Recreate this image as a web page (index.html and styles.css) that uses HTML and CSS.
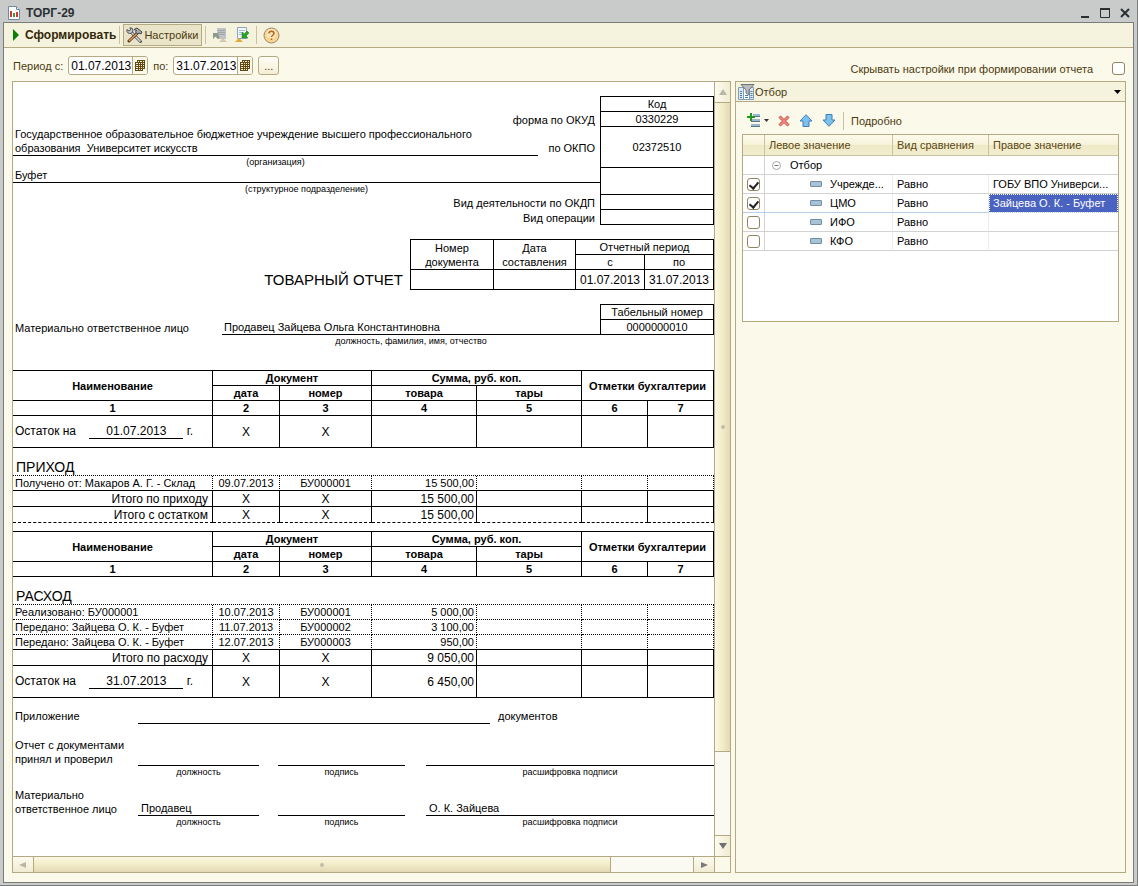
FILE: index.html
```html
<!DOCTYPE html>
<html lang="ru">
<head>
<meta charset="utf-8">
<title>ТОРГ-29</title>
<link rel="stylesheet" href="styles.css">
</head>
<body>
<div class="window">
  <header class="titlebar">
    <svg class="app-icon" width="12" height="14" viewBox="0 0 12 14"><path d="M.5.5h8l3 3v10H.5z" fill="#fff" stroke="#6f8aa5"/><path d="M8.500.5v3h3" fill="#dfe8f0" stroke="#6f8aa5"/><path d="M2 5h2v6H2z" fill="#d8362a"/><path d="M5 7h2v4H5z" fill="#3a9a3a"/><path d="M8 6h2v5H8z" fill="#d8362a"/></svg>
    <h1>ТОРГ-29</h1>
    <div class="window-buttons">
      <button type="button" aria-label="Свернуть"><svg width="12" height="12"><path d="M2 10h8" stroke="#2b3033" stroke-width="2"/></svg></button>
      <button type="button" aria-label="Развернуть"><svg width="12" height="12"><path d="M1.500 2v8.500h9V2" fill="none" stroke="#2b3033"/><path d="M1 2h10" stroke="#2b3033" stroke-width="2"/></svg></button>
      <button type="button" aria-label="Закрыть"><svg width="12" height="12"><path d="M2 2l8 8M10 2l-8 8" stroke="#2b3033" stroke-width="2"/></svg></button>
    </div>
  </header>

  <div class="client">
    <div class="toolbar">
      <button type="button" class="tool run"><svg width="8" height="12"><path d="M1 0l6 6-6 6z" fill="#0a7d0a"/></svg>Сформировать</button>
      <span class="sep"></span>
      <button type="button" class="tool pressed"><svg width="17" height="16" viewBox="0 0 17 16"><path d="M5 5l9.500 9.500" stroke="#4f5357" stroke-width="3" stroke-linecap="round"/><path d="M5 5l9.500 9.500" stroke="#d3d7da" stroke-width="1.500"/><path d="M1 2.500a3 3 0 0 0 4.500 3.500l1.500-2A3 3 0 0 0 4 .7L4.500 3 3 4z" fill="#c4c8cb" stroke="#4f5357"/><path d="M12 5.500L3 14" stroke="#5b3619" stroke-width="3" stroke-linecap="round"/><path d="M11 6.500L3 14" stroke="#d89a62" stroke-width="1.500"/><path d="M8 2.500L11 1l5 4-1 2-2-1-1.500 1L9.500 5l1-1.500z" fill="#a9aeb2" stroke="#3f4346"/></svg>Настройки</button>
      <span class="sep"></span>
      <button type="button" class="tool" aria-label="Восстановить настройки" disabled><svg width="16" height="16" viewBox="0 0 16 16"><path d="M5 1h9v11H5z" fill="#c0c3c5"/><path d="M6 3.500h7M6 5.500h7M6 7.500h7" stroke="#a0a4a7"/><path d="M1 6h6L5.500 7.500 8 10l-2 2-2.500-2.500L1 12z" fill="#8d9889"/><path d="M7 15l4-4 4 4z" fill="#d3c8ae"/></svg></button>
      <button type="button" class="tool" aria-label="Сохранить настройки"><svg width="16" height="16" viewBox="0 0 16 16"><path d="M3.500.5h9v11h-9z" fill="#f3f7fb" stroke="#8aa5c0"/><path d="M5 3.500h6M5 5.500h5M5 7.500h3" stroke="#a9bfd4"/><path d="M8 5v6h6l-2-2 3-3-2-2-3 3z" fill="#2ba12b" stroke="#168716" stroke-width=".5"/><path d="M1 15l4-4 4 4z" fill="#e0aa3c"/></svg></button>
      <span class="sep"></span>
      <button type="button" class="tool" aria-label="Справка"><svg width="17" height="17" viewBox="0 0 17 17"><circle cx="8.500" cy="8.500" r="7.500" fill="#fbd28f" stroke="#9a8a72"/><circle cx="8.500" cy="7" r="5" fill="#fde6bd"/><path d="M6 6.500c0-3 5-3 5 0 0 1.800-2.500 1.700-2.500 3.500M8.500 11.500v1.500" fill="none" stroke="#b5651d" stroke-width="1.500"/></svg></button>
    </div>

    <div class="options">
      <div class="period">
        <label for="from">Период с:</label>
        <span class="date"><input id="from" type="text" value="01.07.2013"><button type="button" aria-label="Выбрать дату начала"><svg width="10" height="11"><path d="M2 0h8v9H8v2H0V2h2z" fill="#604913"/><path d="M3 1h1v1H3zM5 1h2v1H5zM8 1h1v1H8zM1 3h2v1H1zM4 3h1v1H4zM6 3h1v1H6zM8 3h1v1H8zM1 5h2v1H1zM4 5h1v1H4zM6 5h1v1H6zM8 5h1v1H8zM1 7h2v1H1zM4 7h1v1H4zM6 7h1v1H6zM8 7h1v1H8zM1 9h2v1H1zM4 9h1v1H4zM6 9h1v1H6z" fill="#f5ecd0"/></svg></button></span>
        <label for="to">по:</label>
        <span class="date"><input id="to" type="text" value="31.07.2013"><button type="button" aria-label="Выбрать дату окончания"><svg width="10" height="11"><path d="M2 0h8v9H8v2H0V2h2z" fill="#604913"/><path d="M3 1h1v1H3zM5 1h2v1H5zM8 1h1v1H8zM1 3h2v1H1zM4 3h1v1H4zM6 3h1v1H6zM8 3h1v1H8zM1 5h2v1H1zM4 5h1v1H4zM6 5h1v1H6zM8 5h1v1H8zM1 7h2v1H1zM4 7h1v1H4zM6 7h1v1H6zM8 7h1v1H8zM1 9h2v1H1zM4 9h1v1H4zM6 9h1v1H6z" fill="#f5ecd0"/></svg></button></span>
        <button type="button" class="more">...</button>
      </div>
      <label class="hide-option">Скрывать настройки при формировании отчета<input type="checkbox" class="check"></label>
    </div>

    <main class="panes">
      <section class="report">
        <div class="sheet">
          <table class="form head-form">
            <colgroup><col><col class="w62"><col class="w114"></colgroup>
            <tr><td colspan="2"></td><td class="box top">Код</td></tr>
            <tr><td colspan="2" class="cap-right">форма по ОКУД</td><td class="box">0330229</td></tr>
            <tr class="h41"><td class="stack"><div class="line">Государственное образовательное бюджетное учреждение высшего профессионального<br>образования&nbsp; Университет искусств</div><div class="hint">(организация)</div></td><td class="cap-right">по ОКПО</td><td class="box">02372510</td></tr>
            <tr class="h27"><td colspan="2" class="stack"><div class="line">Буфет</div><div class="hint">(структурное подразделение)</div></td><td class="box"></td></tr>
            <tr><td colspan="2" class="cap-right">Вид деятельности по ОКДП</td><td class="box"></td></tr>
            <tr><td colspan="2" class="cap-right">Вид операции</td><td class="box"></td></tr>
          </table>

          <table class="form doc-form">
            <colgroup><col><col class="w84"><col class="w82"><col class="w69"><col class="w69"></colgroup>
            <tr><td rowspan="2"></td><td rowspan="2" class="box top">Номер<br>документа</td><td rowspan="2" class="cell top">Дата<br>составления</td><td colspan="2" class="cell top">Отчетный период</td></tr>
            <tr><td class="cell">с</td><td class="cell">по</td></tr>
            <tr class="h20"><td class="doc-title">ТОВАРНЫЙ ОТЧЕТ</td><td class="box"></td><td class="cell"></td><td class="cell big">01.07.2013</td><td class="cell big">31.07.2013</td></tr>
          </table>

          <table class="form person-form">
            <colgroup><col class="w209"><col><col class="w114"></colgroup>
            <tr><td></td><td></td><td class="box top">Табельный номер</td></tr>
            <tr><td class="text">Материально ответственное лицо</td><td class="under">Продавец Зайцева Ольга Константиновна</td><td class="box">0000000010</td></tr>
            <tr class="h12"><td></td><td class="hint">должность, фамилия, имя, отчество</td><td></td></tr>
          </table>

          <table class="form ledger">
            <colgroup><col><col class="w67"><col class="w92"><col class="w105"><col class="w105"><col class="w66"><col class="w66"></colgroup>
            <thead>
              <tr><th rowspan="2">Наименование</th><th colspan="2">Документ</th><th colspan="2">Сумма, руб. коп.</th><th colspan="2" rowspan="2">Отметки бухгалтерии</th></tr>
              <tr><th>дата</th><th>номер</th><th>товара</th><th>тары</th></tr>
              <tr><th>1</th><th>2</th><th>3</th><th>4</th><th>5</th><th>6</th><th>7</th></tr>
            </thead>
            <tbody>
              <tr class="h32 big"><td class="text"><span class="balance">Остаток на<span class="balance-date">01.07.2013</span>г.</span></td><td>X</td><td>X</td><td></td><td></td><td></td><td></td></tr>
            </tbody>
          </table>
          <h2>ПРИХОД</h2>
          <table class="form ledger rows">
            <colgroup><col><col class="w67"><col class="w92"><col class="w105"><col class="w105"><col class="w66"><col class="w66"></colgroup>
            <tr class="dotted last"><td class="text">Получено от: Макаров А. Г. - Склад</td><td>09.07.2013</td><td>БУ000001</td><td class="num">15 500,00</td><td></td><td></td><td></td></tr>
            <tr class="h16 big"><td class="total">Итого по приходу</td><td>X</td><td>X</td><td class="num">15 500,00</td><td></td><td></td><td></td></tr>
            <tr class="h16 big dashed"><td class="total">Итого с остатком</td><td>X</td><td>X</td><td class="num">15 500,00</td><td></td><td></td><td></td></tr>
          </table>

          <table class="form ledger next">
            <colgroup><col><col class="w67"><col class="w92"><col class="w105"><col class="w105"><col class="w66"><col class="w66"></colgroup>
            <thead>
              <tr><th rowspan="2">Наименование</th><th colspan="2">Документ</th><th colspan="2">Сумма, руб. коп.</th><th colspan="2" rowspan="2">Отметки бухгалтерии</th></tr>
              <tr><th>дата</th><th>номер</th><th>товара</th><th>тары</th></tr>
              <tr><th>1</th><th>2</th><th>3</th><th>4</th><th>5</th><th>6</th><th>7</th></tr>
            </thead>
          </table>
          <h2>РАСХОД</h2>
          <table class="form ledger rows">
            <colgroup><col><col class="w67"><col class="w92"><col class="w105"><col class="w105"><col class="w66"><col class="w66"></colgroup>
            <tr class="dotted"><td class="text">Реализовано: БУ000001</td><td>10.07.2013</td><td>БУ000001</td><td class="num">5 000,00</td><td></td><td></td><td></td></tr>
            <tr class="dotted"><td class="text">Передано: Зайцева О. К. - Буфет</td><td>11.07.2013</td><td>БУ000002</td><td class="num">3 100,00</td><td></td><td></td><td></td></tr>
            <tr class="dotted last"><td class="text">Передано: Зайцева О. К. - Буфет</td><td>12.07.2013</td><td>БУ000003</td><td class="num">950,00</td><td></td><td></td><td></td></tr>
            <tr class="h16 big"><td class="total">Итого по расходу</td><td>X</td><td>X</td><td class="num">9 050,00</td><td></td><td></td><td></td></tr>
            <tr class="h32 big"><td class="text"><span class="balance">Остаток на<span class="balance-date">31.07.2013</span>г.</span></td><td>X</td><td>X</td><td class="num">6 450,00</td><td></td><td></td><td></td></tr>
          </table>

          <div class="attach"><span class="sign-label">Приложение</span><span class="attach-line"></span><span>документов</span></div>
          <div class="signs">
            <div class="sign-label">Отчет с документами<br>принял и проверил</div>
            <div class="sign-line"></div><div class="sign-line"></div><div class="sign-line"></div>
            <div class="hint h-first">должность</div><div class="hint">подпись</div><div class="hint">расшифровка подписи</div>
          </div>
          <div class="signs">
            <div class="sign-label">Материально<br>ответственное лицо</div>
            <div class="sign-line">Продавец</div><div class="sign-line"></div><div class="sign-line">О. К. Зайцева</div>
            <div class="hint h-first">должность</div><div class="hint">подпись</div><div class="hint">расшифровка подписи</div>
          </div>
        </div>
        <div class="vscroll">
          <button type="button" aria-label="Вверх"><svg width="8" height="8"><path d="M0 7l4-6 4 6z" fill="#b9b6a6"/></svg></button>
          <div class="thumb"><i></i></div>
          <div class="track"></div>
          <button type="button" aria-label="Вниз"><svg width="8" height="8"><path d="M0 1l4 6 4-6z" fill="#6f6f6f"/></svg></button>
        </div>
        <div class="hscroll">
          <button type="button" aria-label="Влево"><svg width="8" height="8"><path d="M7 1L0 4l7 3z" fill="#b9b6a6"/></svg></button>
          <div class="thumb"><i></i></div>
          <div class="track"></div>
          <button type="button" aria-label="Вправо"><svg width="8" height="8"><path d="M1 1l7 3-7 3z" fill="#7a7a7a"/></svg></button>
        </div>
        <div class="corner"></div>
      </section>

      <aside class="settings">
        <div class="settings-head">
          <svg width="17" height="16" viewBox="0 0 17 16"><path d="M.5 3.500h15v12H.5z" fill="#fff" stroke="#7f9db9"/><path d="M1 4h4v11H1zM12 4h3v11h-3z" fill="#dce8f2"/><path d="M5.500 4v11M11.500 4v11" stroke="#7f9db9"/><path d="M2 7.500h2M2 9.500h2M2 11.500h2M2 13.500h2M7 11.500h3M7 13.500h3M12.500 7.500h2M12.500 9.500h2M12.500 11.500h2M12.500 13.500h2" stroke="#4a7aa5"/><path d="M3 .5h13L11 6v5l-3-2V6z" fill="#b9bcbd" stroke="#707577"/></svg>
          <select aria-label="Раздел настроек"><option>Отбор</option></select>
          <svg class="drop" width="7" height="4"><path d="M0 0h7L3.500 4z" fill="#000"/></svg>
        </div>
        <div class="settings-body">
          <div class="filter-tools">
            <button type="button" class="tool add" aria-label="Добавить"><svg width="14" height="15" viewBox="0 0 14 15"><path d="M6 1h7v3H6zM4 6h9v3H4zM4 11h9v3H4z" fill="#9db8cb"/><path d="M6 3.500h7M4 8.500h9M4 13.500h9" stroke="#56788f"/><path d="M4 0v8M0 4h8" stroke="#1f9a1f" stroke-width="2"/></svg><svg width="5" height="3"><path d="M0 0h5L2.500 3z" fill="#333"/></svg></button>
            <button type="button" class="tool" aria-label="Удалить"><svg width="12" height="12"><path d="M1.500 1.500l9 9M10.500 1.500l-9 9" stroke="#d0453c" stroke-width="3"/><path d="M1.500 1.500l9 9M10.500 1.500l-9 9" stroke="#f28f84" stroke-width="1.500"/></svg></button>
            <button type="button" class="tool" aria-label="Переместить вверх"><svg width="14" height="13"><path d="M7 .7L13 7h-3v5.500H4V7H1z" fill="#7cc0ee" stroke="#3f7fb5"/></svg></button>
            <button type="button" class="tool" aria-label="Переместить вниз"><svg width="14" height="13"><path d="M7 12.300L13 6h-3V.5H4V6H1z" fill="#7cc0ee" stroke="#3f7fb5"/></svg></button>
            <span class="sep"></span>
            <button type="button" class="tool">Подробно</button>
          </div>
          <div class="filter-frame">
            <table class="filter">
              <colgroup><col class="w22"><col class="w128"><col class="w96"><col></colgroup>
              <thead><tr><th></th><th>Левое значение</th><th>Вид сравнения</th><th>Правое значение</th></tr></thead>
              <tbody>
                <tr><td class="tick"></td><td colspan="3"><span class="group"><svg width="9" height="9"><circle cx="4.500" cy="4.500" r="4" fill="#fff" stroke="#a5a5a5"/><path d="M2.500 4.500h4" stroke="#777"/></svg>Отбор</span></td></tr>
                <tr><td class="tick"><input type="checkbox" class="check" aria-label="Учреждение" checked></td><td><span class="item">Учрежде...</span></td><td>Равно</td><td>ГОБУ ВПО Универси...</td></tr>
                <tr class="current"><td class="tick"><input type="checkbox" class="check" aria-label="ЦМО" checked></td><td><span class="item">ЦМО</span></td><td>Равно</td><td class="selected">Зайцева О. К. - Буфет</td></tr>
                <tr><td class="tick"><input type="checkbox" class="check" aria-label="ИФО"></td><td><span class="item">ИФО</span></td><td>Равно</td><td></td></tr>
                <tr><td class="tick"><input type="checkbox" class="check" aria-label="КФО"></td><td><span class="item">КФО</span></td><td>Равно</td><td></td></tr>
              </tbody>
            </table>
          </div>
        </div>
      </aside>
    </main>
  </div>
</div>
</body>
</html>
```
FILE: styles.css
```css
* { box-sizing: border-box; }

body {
  margin: 0;
  font: 11px/14px "Liberation Sans", Arial, sans-serif;
  color: #000;
}

button, input, select { font: inherit; color: inherit; margin: 0; }
button { padding: 0; border: 0; background: none; }
svg { display: block; flex: none; }

.window {
  display: flex;
  flex-direction: column;
  min-height: 100vh;
  padding: 1px 3px 2px;
  background: #c9cbcb;
  border: solid #7b7d7d;
  border-width: 0 1px 1px 0;
}

.titlebar {
  display: flex;
  align-items: center;
  height: 21px;
  padding: 3px 0 0 5px;
  gap: 6px;
}
.titlebar h1 { flex: 1; margin: 0; font-size: 12px; line-height: 14px; color: #2b3033; }
.window-buttons { display: flex; gap: 8px; padding-right: 3px; }

.client {
  flex: 1;
  display: flex;
  flex-direction: column;
  border: 1px solid #7b7d7d;
  background: #fbf9ea;
  color: #4b3a0e;
}

.toolbar {
  display: flex;
  align-items: center;
  height: 25px;
  padding: 0 8px;
  background: #f5f2dd;
  border-bottom: 1px solid #b3a983;
}
.tool { display: flex; align-items: center; height: 21px; }
.run { gap: 5px; font-size: 12px; font-weight: bold; color: #33280a; }
.pressed { gap: 1px; padding: 0 3px 0 2px; height: 22px; background: #e9e3c8; border: 1px solid #b3a983; }
.sep { width: 1px; height: 18px; margin: 0 3px; background: #c9c1a0; }
.toolbar .tool[aria-label] { margin: 0 3px; }

.options {
  display: flex;
  justify-content: space-between;
  align-items: center;
  height: 33px;
  padding: 0 8px 0 9px;
}
.period { display: flex; align-items: center; gap: 5px; padding-top: 2px; }
.date {
  display: flex;
  width: 80px;
  height: 19px;
  border: 1px solid #b3a983;
  border-radius: 3px;
  background: #fff;
  overflow: hidden;
}
.date input { flex: 1; min-width: 0; border: 0; padding: 0 0 0 2px; background: none; font-size: 12px; color: #000; outline: 0; }
.date button { display: grid; place-items: center; width: 15px; border-left: 1px solid #b3a983; background: #fbf9ea; }
.more { width: 21px; height: 19px; border: 1px solid #b3a983; border-radius: 3px; background: linear-gradient(#fffef5, #f3eed3); }
.hide-option { display: flex; align-items: center; gap: 19px; padding-top: 8px; }

.check {
  appearance: none;
  display: block;
  width: 13px;
  height: 13px;
  border: 1px solid #8f8560;
  border-radius: 3px;
  background: #fff;
}
.check:checked::before {
  content: "";
  display: block;
  width: 4px;
  height: 7px;
  margin: 1px 0 0 3px;
  border: solid #222;
  border-width: 0 2px 2px 0;
  rotate: 40deg;
}

.panes {
  flex: 1;
  display: grid;
  grid-template-columns: minmax(0, 719fr) minmax(0, 391fr);
  gap: 4px;
  padding: 0 7px 9px 8px;
}

.report {
  display: grid;
  grid-template-columns: minmax(0, 1fr) 16px;
  grid-template-rows: 1fr 16px;
  border: 1px solid #b3a983;
  background: #fff;
}
.sheet { padding-top: 14px; color: #000; overflow: hidden; }

.form { width: 100%; table-layout: fixed; border-spacing: 0; }
.form tr { height: 15px; }
.form td, .form th { padding: 0; line-height: 14px; white-space: nowrap; }
.form td.text, .form td.under { padding-left: 2px; }
.form .h12 { height: 12px; }
.form .h16 { height: 16px; }
.form .h20 { height: 20px; }
.form .h27 { height: 27px; }
.form .h32 { height: 32px; }
.form .h41 { height: 41px; }
.w22 { width: 22px; }
.w62 { width: 62px; }
.w66 { width: 66px; }
.w67 { width: 67px; }
.w69 { width: 69px; }
.w82 { width: 82px; }
.w84 { width: 84px; }
.w92 { width: 92px; }
.w96 { width: 96px; }
.w105 { width: 105px; }
.w114 { width: 114px; }
.w128 { width: 128px; }
.w209 { width: 209px; }

.box, .cell { border: solid #000; border-width: 0 1px 1px 0; text-align: center; }
.box { border-left-width: 1px; }
.top { border-top-width: 1px; }
.cap-right { text-align: right; }
.form td.cap-right { padding-right: 5px; }
.form td.stack { vertical-align: top; }
.line { border-bottom: 1px solid #000; padding-left: 2px; }
.hint { text-align: center; font-size: 9px; line-height: 12px; }
.form td.hint { line-height: 12px; }
.form td.under { border-bottom: 1px solid #000; }
.big { font-size: 12px; }
.doc-title { text-align: right; font-size: 15px; }
.form td.doc-title { padding-right: 7px; line-height: 18px; }
.doc-form, .person-form { margin-top: 14px; }

.ledger { margin-top: 23px; border-top: 1px solid #000; text-align: center; }
.ledger td, .ledger th { border: solid #000; border-width: 0 1px 1px 0; }
.ledger td.text { text-align: left; }
.ledger.rows { margin-top: 0; border-top-style: dotted; }
.ledger.next { margin-top: 8px; }
.ledger .dotted td { border-style: dotted; }
.ledger .dotted.last td { border-bottom-style: solid; }
.ledger .dashed td { border-bottom-style: dashed; }
.ledger td.total { text-align: right; padding-right: 4px; }
.ledger td.num { text-align: right; padding-right: 2px; }
.balance { display: flex; justify-content: space-between; padding-right: 19px; }
.balance-date { width: 94px; margin-left: 10px; border-bottom: 1px solid #000; text-align: center; }
.sheet h2 { margin: 0; padding: 11px 0 0 3px; height: 27px; font-size: 14px; font-weight: normal; line-height: 16px; }

.attach { display: flex; height: 40px; padding-top: 11px; }
.sign-label { width: 125px; padding-left: 2px; }
.attach-line { flex: 0 1 352px; height: 15px; margin-right: 8px; border-bottom: 1px solid #000; }
.signs {
  display: grid;
  grid-template-columns: 125px 121px 19px 127px 21px minmax(0, 1fr);
  grid-template-rows: 28px 12px;
  height: 50px;
}
.signs > .sign-label { grid-row: 1; width: auto; }
.sign-line { grid-row: 1; grid-column: 2; display: flex; align-items: flex-end; padding-left: 3px; border-bottom: 1px solid #000; }
.sign-line + .sign-line { grid-column: 4; }
.sign-line + .sign-line + .sign-line { grid-column: 6; }
.signs .hint { grid-row: 2; grid-column: 4; }
.signs .h-first { grid-column: 2; }
.signs .hint:last-child { grid-column: 6; }

.vscroll { display: flex; flex-direction: column; border-left: 1px solid #b3a983; background: #fbfaf2; }
.vscroll button { display: grid; place-items: center; height: 21px; border-bottom: 1px solid #b3a983; background: linear-gradient(90deg, #fdfbef, #f0ecd2); }
.vscroll button:last-child { border-top: 1px solid #b3a983; border-bottom: 0; }
.vscroll .thumb { flex: 650; border-bottom: 1px solid #b3a983; background: linear-gradient(90deg, #fbf8e4, #f2ecc8 50%, #e2d9b4); }
.vscroll .track { flex: 83; }
.thumb { display: grid; place-items: center; }
.thumb i { width: 4px; height: 4px; border-radius: 2px; background: #c3bea6; }
.hscroll { display: flex; border-top: 1px solid #b3a983; background: #fbfaf2; }
.hscroll button { display: grid; place-items: center; width: 21px; border-right: 1px solid #b3a983; background: linear-gradient(#fdfbef, #f0ecd2); }
.hscroll button:last-child { border-left: 1px solid #b3a983; border-right: 0; }
.hscroll .thumb { flex: 577; border-right: 1px solid #b3a983; background: linear-gradient(#fbf8e4, #f2ecc8 50%, #e2d9b4); }
.hscroll .track { flex: 82; }
.corner { border: solid #b3a983; border-width: 1px 0 0 1px; background: #fbf9ea; }

.settings { border: 1px solid #b3a983; }
.settings-head { display: flex; align-items: center; height: 20px; padding: 0 4px 0 2px; background: #f5f2dd; border-bottom: 1px solid #b3a983; }
.settings-head select { flex: 1; appearance: none; border: 0; padding: 0; background: none; outline: 0; }
.settings-body { padding: 8px 6px; }
.filter-tools { display: flex; align-items: center; gap: 9px; height: 21px; margin-bottom: 3px; padding-left: 5px; }
.filter-tools .add { gap: 3px; }
.filter-tools .sep { margin: 0 -2px; }
.filter-frame { min-height: 188px; border: 1px solid #b3a983; background: #fff; }

.filter { width: 100%; table-layout: fixed; border-spacing: 0; color: #000; }
.filter th {
  height: 21px;
  padding: 0 0 0 4px;
  text-align: left;
  font-weight: normal;
  color: #5a4713;
  background: linear-gradient(#fcfaec, #f6f2d9 50%, #efe9c6 51%, #f2edcf);
  border: solid #c9c1a0;
  border-width: 0 1px 1px 0;
}
.filter th:last-child { border-right: 0; }
.filter td { height: 19px; padding: 0 0 0 4px; border: solid #d2d2d2; border-width: 0 1px 1px 0; white-space: nowrap; overflow: hidden; }
.filter td + td { border-right-color: #ececec; }
.filter td:last-child { border-right: 0; }
.filter .current td { border-bottom-color: #b5cfe6; }
.filter td.selected { background: #4a63c0; color: #fff; outline: 1px dotted #fff; outline-offset: -1px; }
.group { display: flex; align-items: center; gap: 9px; padding-left: 3px; }
.item { display: flex; align-items: center; gap: 8px; padding-left: 41px; }
.item::before { content: ""; width: 10px; height: 4px; border: 1px solid #6f8ea6; border-radius: 1px; background: #a9c3d6; }
```
